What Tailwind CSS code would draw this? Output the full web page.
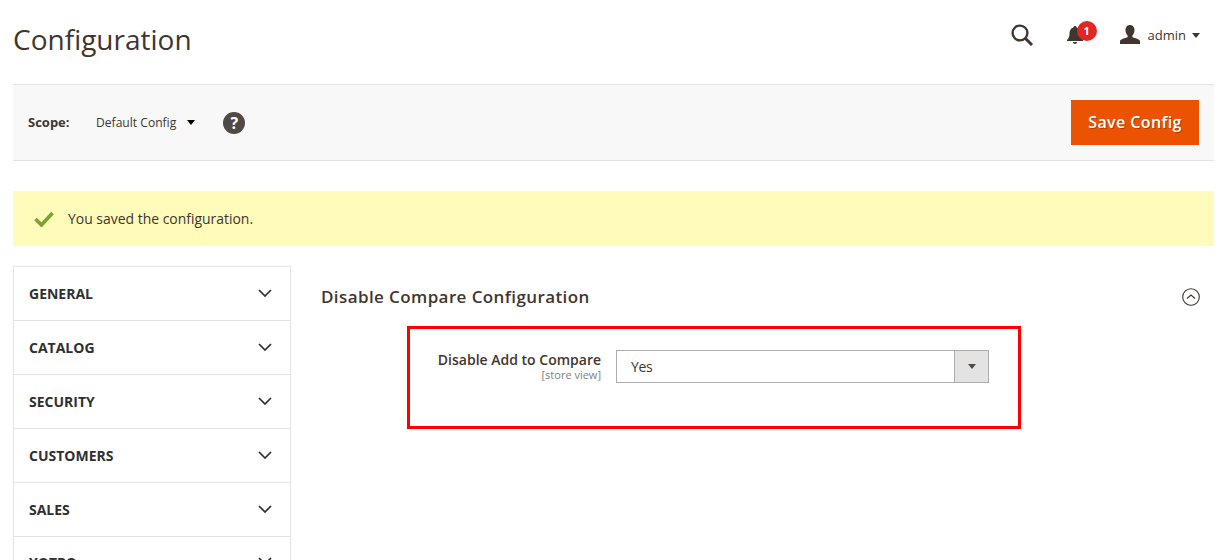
<html lang="en">
<head>
    <meta charset="UTF-8">
    <title>Configuration</title>
    <script src="https://cdn.jsdelivr.net/npm/@tailwindcss/browser@4"></script>
</head>
<body class="bg-white text-[#41362f] font-['Open_Sans',sans-serif] overflow-hidden">
    <div class="h-[560px] w-[1221px] overflow-hidden pl-[13px] pr-[7px]">
        <!-- header -->
        <header class="h-[84px] flex items-start justify-between">
            <h1 class="text-[28px] leading-[38px] mt-[20px] text-[#41362f]">Configuration</h1>
            <div class="flex items-center mt-[22px] h-[26px] mr-[14px]">
                <svg class="w-[24px] h-[24px] mr-[32px]" viewBox="0 0 24 24" fill="none" stroke="#41362f" stroke-width="2.4">
                    <circle cx="10" cy="10" r="7.4"/>
                    <path d="M15.5 15.5 L22 22" stroke-width="3"/>
                </svg>
                <div class="relative w-[20px] h-[20px] mr-[34px]">
                    <svg class="w-[18px] h-[20px]" viewBox="0 0 18 20" fill="#41362f">
                        <path d="M9 1c1 0 1.500.6 1.600 1.500C13.400 3.200 14.500 5.500 14.500 8.500c0 3 .8 5 2.500 6.500v1H1v-1c1.700-1.500 2.500-3.500 2.500-6.500 0-3 1.100-5.300 3.900-6C7.500 1.600 8 1 9 1zM7 17h4c0 1.200-.9 2-2 2s-2-.8-2-2z"/>
                    </svg>
                    <span class="absolute left-[11px] top-[-4px] w-[20px] h-[20px] rounded-full bg-[#e22626] text-white text-[11px] leading-[20px] font-bold text-center">1</span>
                </div>
                <svg class="w-[20px] h-[20px] mr-[8px]" viewBox="0 0 20 20" fill="#41362f">
                    <path d="M10 0c2.800 0 4.500 2.200 4.500 5.200 0 2.300-1 4.200-2.100 5.200v1.800c2.800.9 7 1.800 7.600 3.700V19H0v-3.100c.6-1.900 4.800-2.800 7.600-3.700v-1.800c-1.100-1-2.100-2.900-2.100-5.200C5.500 2.200 7.200 0 10 0z"/>
                </svg>
                <span class="text-[13px] leading-[20px] mr-[6px]">admin</span>
                <span class="w-0 h-0 border-x-[4.500px] border-x-transparent border-t-[5px] border-t-[#41362f]"></span>
            </div>
        </header>

        <!-- scope bar -->
        <div class="h-[77px] bg-[#f8f8f8] border-y border-[#e3e3e3] flex items-center justify-between pl-[15px] pr-[15px]">
            <div class="flex items-center">
                <span class="text-[13px] font-bold w-[68px]">Scope:</span>
                <span class="text-[12.100px] mr-[11px] mt-[1px]">Default Config</span>
                <span class="w-0 h-0 border-x-[4px] border-x-transparent border-t-[5px] border-t-[#000] mr-[28px]"></span>
                <span class="w-[22px] h-[22px] rounded-full bg-[#514943] text-white text-[16px] font-bold leading-[22px] text-center">?</span>
            </div>
            <button class="w-[128px] h-[45px] pb-[2px] bg-[#eb5202] text-white text-[16px] font-semibold tracking-[0.4px] [text-shadow:1px_1px_0_rgba(0,0,0,0.25)]">Save Config</button>
        </div>

        <!-- message -->
        <div class="mt-[30px] h-[55px] bg-[#fffbbb] flex items-center pl-[21px]">
            <svg class="w-[20px] h-[16px] mr-[14px]" viewBox="0 0 20 16" fill="none" stroke="#79a22e" stroke-width="3.600">
                <path d="M1.500 8 L7.500 14 L18.500 2"/>
            </svg>
            <span class="text-[13.950px] text-[#41362f] pt-[2px]">You saved the configuration.</span>
        </div>

        <!-- content -->
        <div class="mt-[20px] flex items-start">
            <nav class="w-[278px] border border-[#e3e3e3] shrink-0">
                <div class="h-[54px] border-b border-[#e3e3e3] flex items-center justify-between pl-[15px] pr-[18px] text-[14px] font-bold text-[#303030]">GENERAL
                    <svg class="w-[14px] h-[8px] mb-[2px]" viewBox="0 0 14 8" fill="none" stroke="#303030" stroke-width="1.700"><path d="M1 1 L7 7 L13 1"/></svg>
                </div>
                <div class="h-[54px] border-b border-[#e3e3e3] flex items-center justify-between pl-[15px] pr-[18px] text-[14px] font-bold text-[#303030]">CATALOG
                    <svg class="w-[14px] h-[8px] mb-[2px]" viewBox="0 0 14 8" fill="none" stroke="#303030" stroke-width="1.700"><path d="M1 1 L7 7 L13 1"/></svg>
                </div>
                <div class="h-[54px] border-b border-[#e3e3e3] flex items-center justify-between pl-[15px] pr-[18px] text-[14px] font-bold text-[#303030]">SECURITY
                    <svg class="w-[14px] h-[8px] mb-[2px]" viewBox="0 0 14 8" fill="none" stroke="#303030" stroke-width="1.700"><path d="M1 1 L7 7 L13 1"/></svg>
                </div>
                <div class="h-[54px] border-b border-[#e3e3e3] flex items-center justify-between pl-[15px] pr-[18px] text-[14px] font-bold text-[#303030]">CUSTOMERS
                    <svg class="w-[14px] h-[8px] mb-[2px]" viewBox="0 0 14 8" fill="none" stroke="#303030" stroke-width="1.700"><path d="M1 1 L7 7 L13 1"/></svg>
                </div>
                <div class="h-[54px] border-b border-[#e3e3e3] flex items-center justify-between pl-[15px] pr-[18px] text-[14px] font-bold text-[#303030]">SALES
                    <svg class="w-[14px] h-[8px] mb-[2px]" viewBox="0 0 14 8" fill="none" stroke="#303030" stroke-width="1.700"><path d="M1 1 L7 7 L13 1"/></svg>
                </div>
                <div class="h-[54px] border-b border-[#e3e3e3] flex items-center justify-between pl-[15px] pr-[18px] pb-[3px] text-[14px] font-bold text-[#303030]">YOTPO
                    <svg class="w-[14px] h-[8px] mb-[2px]" viewBox="0 0 14 8" fill="none" stroke="#303030" stroke-width="1.700"><path d="M1 1 L7 7 L13 1"/></svg>
                </div>
            </nav>

            <main class="flex-1 pl-[30px]">
                <div class="h-[60px] pt-[1px] flex items-center justify-between pr-[14px]">
                    <h2 class="text-[17px] font-semibold tracking-[0.4px] text-[#41362f]">Disable Compare Configuration</h2>
                    <svg class="w-[18px] h-[18px]" viewBox="0 0 18 18" fill="none">
                        <circle cx="9" cy="9" r="8.300" stroke="#41362f" stroke-width="1.100"/>
                        <path d="M5 10.500 L9 7 L13 10.500" stroke="#41362f" stroke-width="1.100"/>
                    </svg>
                </div>
                <div class="ml-[86px] w-[614px] h-[103px] border-[3px] border-[#ff0000] flex items-start pt-[21px]">
                    <div class="w-[191px] text-right">
                        <div class="text-[14px] font-semibold leading-[19px] text-[#41362f]">Disable Add to Compare</div>
                        <div class="text-[11px] leading-[11px] text-[#808080]">[store view]</div>
                    </div>
                    <div class="ml-[15px] w-[373px] h-[33px] border border-[#adadad] flex items-center justify-between">
                        <span class="pl-[14px] text-[14px] tracking-[-0.3px]">Yes</span>
                        <span class="w-[34px] h-full bg-[#e3e3e3] border-l border-[#adadad] flex items-center justify-center">
                            <span class="w-0 h-0 border-x-[4px] border-x-transparent border-t-[5px] border-t-[#514943]"></span>
                        </span>
                    </div>
                </div>
            </main>
        </div>
    </div>
</body>
</html>
